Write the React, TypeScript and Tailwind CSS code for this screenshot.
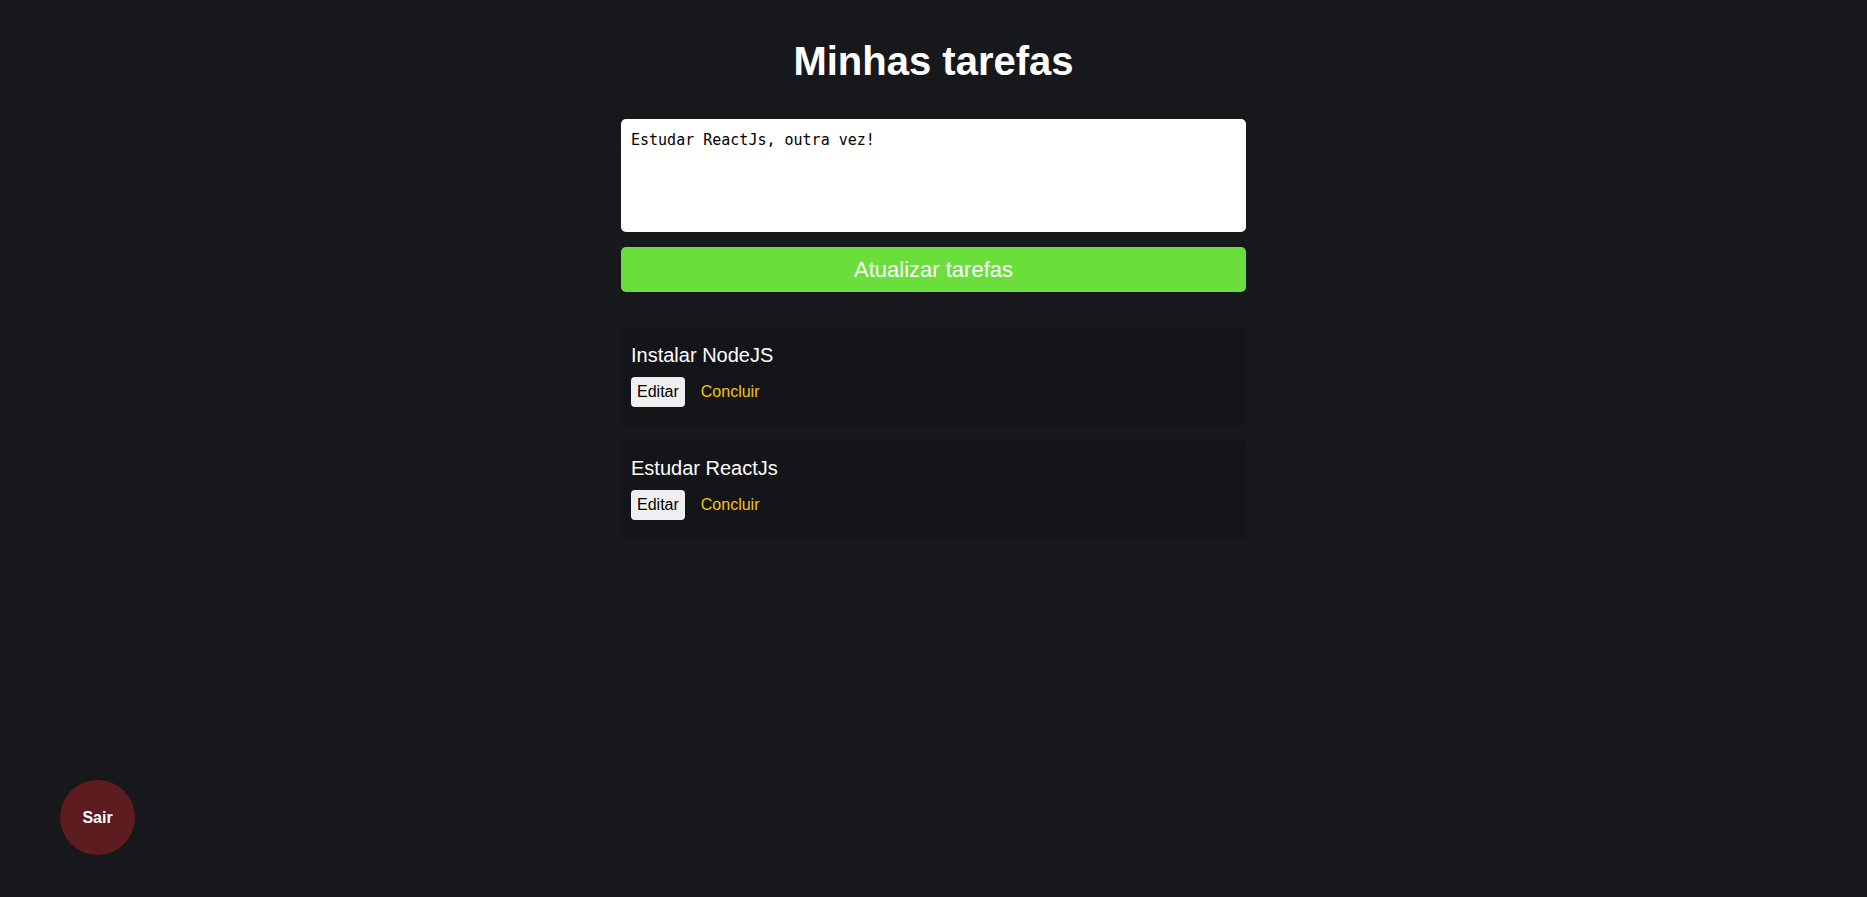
import React, { useState } from 'react';

interface Task {
  id: number;
  title: string;
}

const initialTasks: Task[] = [
  { id: 1, title: 'Instalar NodeJS' },
  { id: 2, title: 'Estudar ReactJs' },
];

const TaskItem: React.FC<{ task: Task; onEdit: (t: Task) => void }> = ({ task, onEdit }) => {
  return (
    <article className="bg-[#141518] rounded-[4px] pt-[17px] pb-[19px] px-[10px]">
      <p className="text-[20px] leading-[23px] text-white">{task.title}</p>
      <div className="mt-[10px] flex items-center">
        <button
          onClick={() => onEdit(task)}
          className="h-[30px] px-[6px] rounded-[4px] bg-[#efefef] text-[16px] text-black"
        >
          Editar
        </button>
        <button className="ml-[16px] text-[16px] text-[#f5c20d]">Concluir</button>
      </div>
    </article>
  );
};

export default function App() {
  const [text, setText] = useState('Estudar ReactJs, outra vez!');
  const [tasks] = useState<Task[]>(initialTasks);

  return (
    <div className="min-h-screen bg-[#17181c] font-['Liberation_Sans',Arial,sans-serif]">
      <main className="flex flex-col items-center pt-[38px]">
        <h1 className="text-[40px] leading-[46px] font-bold text-white">Minhas tarefas</h1>

        <form className="w-[625px] mt-[35px] flex flex-col" onSubmit={e => e.preventDefault()}>
          <textarea
            value={text}
            onChange={e => setText(e.target.value)}
            className="h-[113px] w-full resize-none rounded-[5px] bg-white p-[10px] text-[15px] text-black outline-none font-['DejaVu_Sans_Mono','Liberation_Mono',monospace]"
          />
          <button
            type="submit"
            className="mt-[15px] h-[45px] w-full rounded-[5px] bg-[#6ade3a] text-[22px] text-white"
          >
            Atualizar tarefas
          </button>
        </form>

        <section className="w-[625px] mt-[35px] flex flex-col gap-[14px]">
          {tasks.map(task => (
            <TaskItem key={task.id} task={task} onEdit={t => setText(t.title)} />
          ))}
        </section>
      </main>

      <button className="fixed left-[60px] bottom-[42px] w-[75px] h-[75px] rounded-full bg-[#5c1c20] text-[16px] font-bold text-white">
        Sair
      </button>
    </div>
  );
}
